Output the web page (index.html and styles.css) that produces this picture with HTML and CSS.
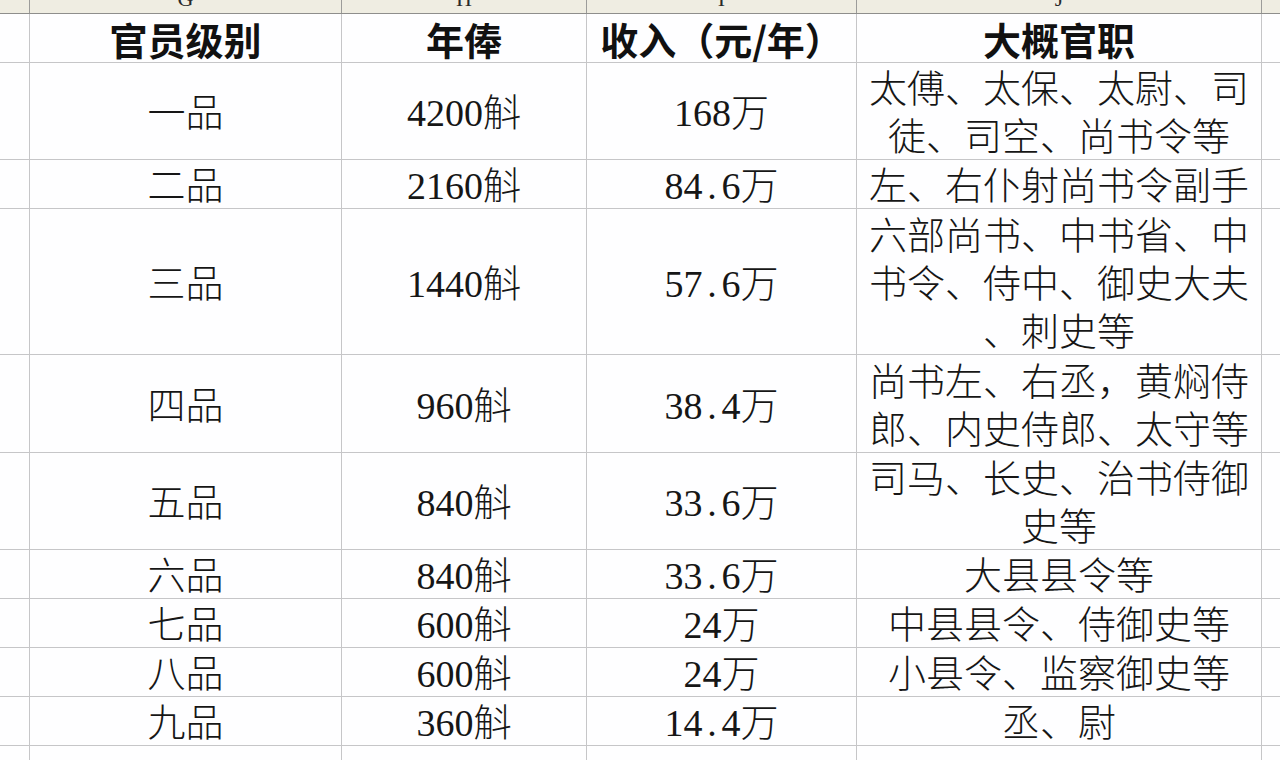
FILE: index.html
```html
<!DOCTYPE html>
<html lang="zh-CN">
<head>
<meta charset="utf-8">
<title>官员级别</title>
<link rel="stylesheet" href="styles.css">
</head>
<body>
<div class="sheet">
  <div class="colbar">
    <div class="colhead"></div>
    <div class="colhead"><span>G</span></div>
    <div class="colhead"><span>H</span></div>
    <div class="colhead"><span>I</span></div>
    <div class="colhead"><span>J</span></div>
    <div class="colhead"></div>
  </div>
  <div class="grid">
    <div class="cell"></div>
    <div class="cell th">官员级别</div>
    <div class="cell th">年俸</div>
    <div class="cell th">收入（元/年）</div>
    <div class="cell th">大概官职</div>
    <div class="cell"></div>

    <div class="cell"></div>
    <div class="cell">一品</div>
    <div class="cell">4200斛</div>
    <div class="cell">168万</div>
    <div class="cell"><span class="ln">太傅、太保、太尉、司</span><span class="ln">徒、司空、尚书令等</span></div>
    <div class="cell"></div>

    <div class="cell"></div>
    <div class="cell">二品</div>
    <div class="cell">2160斛</div>
    <div class="cell"><span class="ln">84<span class="dot">.</span>6万</span></div>
    <div class="cell"><span class="ln">左、右仆射尚书令副手</span></div>
    <div class="cell"></div>

    <div class="cell"></div>
    <div class="cell">三品</div>
    <div class="cell">1440斛</div>
    <div class="cell"><span class="ln">57<span class="dot">.</span>6万</span></div>
    <div class="cell"><span class="ln">六部尚书、中书省、中</span><span class="ln">书令、侍中、御史大夫</span><span class="ln">、刺史等</span></div>
    <div class="cell"></div>

    <div class="cell"></div>
    <div class="cell">四品</div>
    <div class="cell">960斛</div>
    <div class="cell"><span class="ln">38<span class="dot">.</span>4万</span></div>
    <div class="cell"><span class="ln">尚书左、右丞，黄焖侍</span><span class="ln">郎、内史侍郎、太守等</span></div>
    <div class="cell"></div>

    <div class="cell"></div>
    <div class="cell">五品</div>
    <div class="cell">840斛</div>
    <div class="cell"><span class="ln">33<span class="dot">.</span>6万</span></div>
    <div class="cell"><span class="ln">司马、长史、治书侍御</span><span class="ln">史等</span></div>
    <div class="cell"></div>

    <div class="cell"></div>
    <div class="cell">六品</div>
    <div class="cell">840斛</div>
    <div class="cell"><span class="ln">33<span class="dot">.</span>6万</span></div>
    <div class="cell">大县县令等</div>
    <div class="cell"></div>

    <div class="cell"></div>
    <div class="cell">七品</div>
    <div class="cell">600斛</div>
    <div class="cell">24万</div>
    <div class="cell">中县县令、侍御史等</div>
    <div class="cell"></div>

    <div class="cell"></div>
    <div class="cell">八品</div>
    <div class="cell">600斛</div>
    <div class="cell">24万</div>
    <div class="cell">小县令、监察御史等</div>
    <div class="cell"></div>

    <div class="cell"></div>
    <div class="cell">九品</div>
    <div class="cell">360斛</div>
    <div class="cell"><span class="ln">14<span class="dot">.</span>4万</span></div>
    <div class="cell">丞、尉</div>
    <div class="cell"></div>

    <div class="cell"></div>
    <div class="cell"></div>
    <div class="cell"></div>
    <div class="cell"></div>
    <div class="cell"></div>
    <div class="cell"></div>
  </div>
</div>
</body>
</html>
```

FILE: styles.css
```css
html, body {
  margin: 0;
  padding: 0;
  background: #fefeff;
}

body {
  width: 1280px;
  height: 760px;
  overflow: hidden;
  font-family: "Liberation Serif", "Noto Sans CJK SC", serif;
  color: #161616;
}

.sheet {
  display: flex;
  flex-direction: column;
}

.colbar {
  display: grid;
  grid-template-columns: 29px 311px 244px 269px 404px 1fr;
  column-gap: 1px;
  height: 13px;
  background: #9c9c9a;
  border-bottom: 1px solid #8e8e8c;
}

.colhead {
  background: #efede2;
  overflow: hidden;
  display: flex;
  justify-content: center;
  align-items: flex-end;
}

.colhead span {
  font-family: "Liberation Serif", serif;
  font-size: 22px;
  line-height: 22px;
  color: #2a2a2a;
  margin-bottom: 3px;
}

.grid {
  display: grid;
  grid-template-columns: 29px 311px 244px 269px 404px 1fr;
  grid-template-rows: 48px 96px 48px 145px 97px 96px 48px 48px 48px 48px 40px;
  gap: 1px;
  background: #c6c6c8;
}

.cell {
  box-sizing: border-box;
  background: #fefeff;
  display: flex;
  flex-direction: column;
  justify-content: center;
  align-items: center;
  text-align: center;
  font-size: 38px;
  font-weight: 300;
  line-height: 48px;
  white-space: nowrap;
  overflow: hidden;
  padding-top: 4px;
}

.th {
  font-family: "Noto Sans CJK SC", sans-serif;
  font-weight: 700;
  color: #111;
  padding-top: 2px;
}

.ln {
  display: block;
}

.dot {
  display: inline-block;
  width: 19px;
  text-align: center;
}
```
